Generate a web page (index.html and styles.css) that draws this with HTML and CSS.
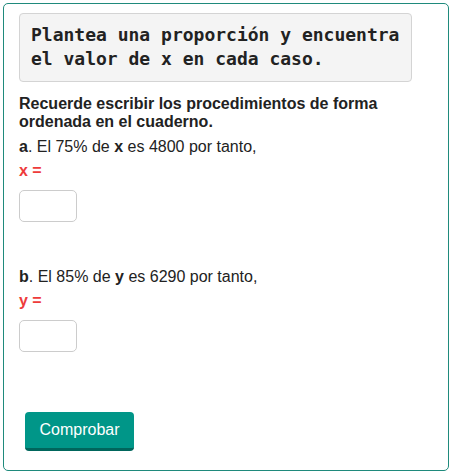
FILE: index.html
```html
<!DOCTYPE html>
<html lang="es">
<head>
    <meta charset="UTF-8">
    <title>Proporciones</title>
    <link rel="stylesheet" href="styles.css">
</head>
<body>

<div class="card">
    <div class="prompt">Plantea una proporción y encuentra el valor de x en cada caso.</div>

    <p class="note">Recuerde escribir los procedimientos de forma ordenada en el cuaderno.</p>

    <div class="item">
        <p><b>a</b>. El 75% de <b>x</b> es 4800 por tanto,</p>
        <p class="var">x =</p>
        <input class="answer" type="text">
    </div>

    <div class="item item-b">
        <p><b>b</b>. El 85% de <b>y</b> es 6290 por tanto,</p>
        <p class="var">y =</p>
        <input class="answer" type="text">
    </div>

    <button class="check">Comprobar</button>
</div>

</body>
</html>
```

FILE: styles.css
```css
body {
    margin: 0;
    font-family: "Liberation Sans", Arial, sans-serif;
    font-size: 16px;
    color: #222;
}

p {
    margin: 0;
}

.card {
    margin: 3px 5px 0 3px;
    border: 1px solid #1f8a7c;
    border-radius: 5px;
    padding: 9px 15px 19px;
    height: 438px;
}

.prompt {
    width: 370px;
    padding: 9px 10px 10px 11px;
    background: #f4f4f4;
    border: 1px solid #d4d4d4;
    border-radius: 4px;
    font-family: "DejaVu Sans Mono", "Liberation Mono", monospace;
    font-weight: bold;
    font-size: 18px;
    line-height: 24px;
    color: #222;
}

.note {
    margin-top: 13px;
    font-weight: bold;
    line-height: 18px;
}

.item {
    margin-top: 5px;
    line-height: 22px;
}

.item-b {
    margin-top: 44px;
}

.var {
    margin-top: 2px;
    color: #ee3b3b;
    font-weight: bold;
}

.answer {
    display: block;
    margin-top: 8px;
    width: 58px;
    height: 32px;
    box-sizing: border-box;
    border: 1px solid #cccccc;
    border-radius: 5px;
    background: #fff;
}

.check {
    margin: 60px 0 0 6px;
    width: 109px;
    height: 39px;
    border: 0;
    border-bottom: 3px solid #00665c;
    border-radius: 4px;
    background: #009688;
    color: #fff;
    font-family: "Liberation Sans", Arial, sans-serif;
    font-size: 16px;
    padding: 0;
}
```
